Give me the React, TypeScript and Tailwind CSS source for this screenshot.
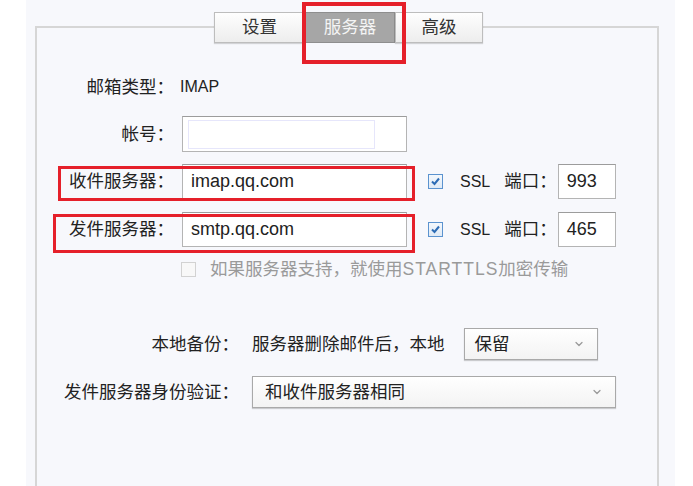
import { ChevronDown } from "lucide-react";

const font = { fontFamily: '"Liberation Sans", "Noto Sans CJK SC", sans-serif' };

function Tab({ label, active }: { label: string; active?: boolean }) {
  return (
    <div
      className={
        active
          ? "h-full flex items-center justify-center bg-[#a6a6a6] border border-[#8e8e8e] text-[#f4f4f4]"
          : "h-full flex items-center justify-center bg-gradient-to-b from-[#fefefe] to-[#ededed] border border-[#bdbdbd] text-[#333] shadow-[0_1px_1px_rgba(0,0,0,0.15)]"
      }
    >
      {label}
    </div>
  );
}

function CheckBox({ checked, disabled }: { checked?: boolean; disabled?: boolean }) {
  return (
    <span
      className={`inline-flex w-[15px] h-[15px] items-center justify-center border ${
        disabled ? "border-[#d2d2d2] bg-[#f8f8f8]" : "border-[#5b93cf] bg-gradient-to-b from-[#f4f8fc] to-[#dfeaf6]"
      }`}
    >
      {checked && (
        <svg width="11" height="11" viewBox="0 0 11 11">
          <path d="M2 5.5 L4.5 8 L9 2.5" fill="none" stroke="#2d6cb5" strokeWidth="2" />
        </svg>
      )}
    </span>
  );
}

function Select({ value, className }: { value: string; className: string }) {
  return (
    <div
      className={`h-[32px] flex items-center justify-between border border-[#a9a9a9] bg-gradient-to-b from-white to-[#f3f3f3] shadow-[0_1px_1px_rgba(0,0,0,0.18)] text-[#222] ${className}`}
    >
      <span>{value}</span>
      <ChevronDown size={12} strokeWidth={2.5} color="#9a9a9a" />
    </div>
  );
}

const inputCls = "h-[35px] bg-white border border-[#b4b4b4] border-t-[#9c9c9c] flex items-center text-[18px] text-[#222]";

export default function App() {
  return (
    <div className="w-[693px] h-[486px] bg-white overflow-hidden relative text-[17.5px] text-[#222]" style={font}>
      <div className="ml-[26px] w-[649px] h-full bg-[#f7f8fc] pt-[26px] pl-[9px] pr-[16px]">
        <div className="border-2 border-[#d6d6d6] h-[480px] flex flex-col">
          {/* tabs */}
          <div className="-mt-[16px] ml-[177px] h-[31px] grid grid-cols-[91px_90px_88px]">
            <Tab label="设置" />
            <Tab label="服务器" active />
            <Tab label="高级" />
          </div>

          <div className="mt-[32px] h-[24px] flex items-center">
            <span className="w-[137px] text-right">邮箱类型：</span>
            <span className="ml-[6px] text-[16px]">IMAP</span>
          </div>

          <div className="mt-[17px] h-[36px] flex items-center">
            <span className="w-[137px] text-right">帐号：</span>
            <div className={`ml-[8px] w-[225px] ${inputCls} h-[36px]`}>
              <div className="ml-[5px] w-[187px] h-[29px] bg-white border border-[#e6e6fb]" />
            </div>
          </div>

          <div className="mt-[12px] h-[35px] flex items-center relative">
            <span className="w-[137px] text-right">收件服务器：</span>
            <div className={`ml-[8px] w-[225px] pl-[8px] ${inputCls}`}>imap.qq.com</div>
            <div className="ml-[21px] flex items-center">
              <CheckBox checked />
              <span className="ml-[17px] text-[16px]">SSL</span>
              <span className="ml-[14px]">端口：</span>
              <div className={`ml-[1px] w-[58px] pl-[8px] ${inputCls}`}>993</div>
            </div>
            <span className="absolute left-[21px] top-[2px] w-[357px] h-[35px] border-[3px] border-[#e5202a]" />
          </div>

          <div className="mt-[13px] h-[35px] flex items-center relative">
            <span className="w-[137px] text-right">发件服务器：</span>
            <div className={`ml-[8px] w-[225px] pl-[8px] ${inputCls}`}>smtp.qq.com</div>
            <div className="ml-[21px] flex items-center">
              <CheckBox checked />
              <span className="ml-[17px] text-[16px]">SSL</span>
              <span className="ml-[14px]">端口：</span>
              <div className={`ml-[1px] w-[58px] pl-[8px] ${inputCls}`}>465</div>
            </div>
            <span className="absolute left-[16px] top-[2px] w-[362px] h-[39px] border-[3px] border-[#e5202a]" />
          </div>

          <div className="mt-[12px] h-[20px] flex items-center pl-[144px]">
            <CheckBox disabled />
            <span className="ml-[14px] text-[#9a9a9a]">
              如果服务器支持，就使用<span className="tracking-[1px]">STARTTLS</span>加密传输
            </span>
          </div>

          <div className="mt-[49px] h-[32px] flex items-center">
            <span className="w-[202px] text-right">本地备份：</span>
            <span className="ml-[13px]">服务器删除邮件后，本地</span>
            <Select value="保留" className="ml-[19px] w-[134px] pl-[10px] pr-[12px]" />
          </div>

          <div className="mt-[16px] h-[32px] flex items-center">
            <span className="w-[202px] text-right">发件服务器身份验证：</span>
            <Select value="和收件服务器相同" className="ml-[13px] w-[364px] pl-[12px] pr-[12px]" />
          </div>
        </div>
      </div>
      {/* highlight around active tab */}
      <span className="absolute left-[302px] top-[2px] w-[104px] h-[62px] border-4 border-[#e5202a]" />
    </div>
  );
}
